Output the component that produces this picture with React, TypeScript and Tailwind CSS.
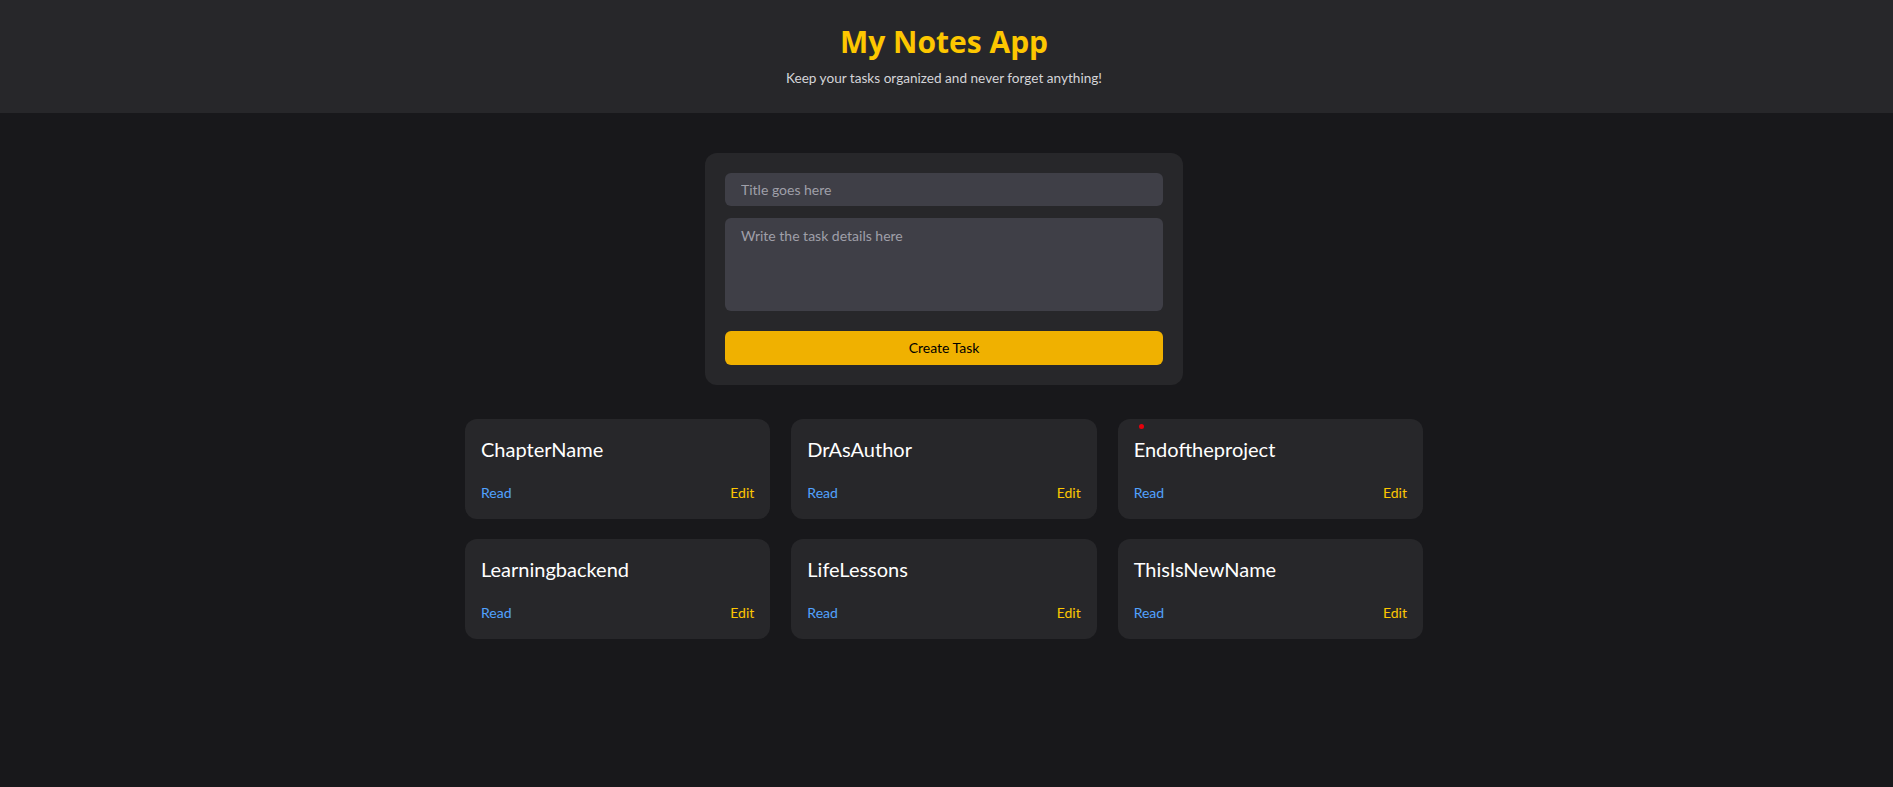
import React, { useState } from "react";

interface Note {
  title: string;
  badge?: boolean;
}

const NOTES: Note[] = [
  { title: "ChapterName" },
  { title: "DrAsAuthor" },
  { title: "Endoftheproject", badge: true },
  { title: "Learningbackend" },
  { title: "LifeLessons" },
  { title: "ThisIsNewName" },
];

const NoteCard = ({ note }: { note: Note }) => (
  <div className="relative rounded-xl bg-zinc-800 p-4">
    {note.badge && (
      <span className="absolute left-[21px] top-[5px] h-[5px] w-[5px] rounded-full bg-red-600" />
    )}
    <h2 className="mb-5 text-xl leading-7 text-white">{note.title}</h2>
    <div className="flex items-center justify-between text-sm leading-5">
      <button className="text-blue-400">Read</button>
      <button className="text-yellow-400">Edit</button>
    </div>
  </div>
);

export default function App() {
  const [title, setTitle] = useState("");
  const [details, setDetails] = useState("");

  return (
    <div className="min-h-screen bg-[#18181b] font-['Lato',sans-serif]">
      <header className="bg-zinc-800 pb-[25px] pr-[5px] pt-6 text-center">
        <h1 className="mb-2 font-['Open_Sans',sans-serif] text-3xl font-bold text-yellow-400">
          My Notes App
        </h1>
        <p className="text-[13.6px] leading-5 text-zinc-300">
          Keep your tasks organized and never forget anything!
        </p>
      </header>

      <main className="flex flex-col items-center pr-[5px] pt-10">
        <form
          className="flex w-[478px] flex-col rounded-xl bg-zinc-800 p-5"
          onSubmit={e => e.preventDefault()}
        >
          <input
            value={title}
            onChange={e => setTitle(e.target.value)}
            placeholder="Title goes here"
            className="h-[33px] rounded-md bg-zinc-700 px-4 text-sm text-zinc-100 outline-none placeholder:text-zinc-400"
          />
          <textarea
            value={details}
            onChange={e => setDetails(e.target.value)}
            placeholder="Write the task details here"
            className="mt-3 h-[93px] resize-none rounded-md bg-zinc-700 px-4 py-2 text-sm text-zinc-100 outline-none placeholder:text-zinc-400"
          />
          <button
            type="submit"
            className="mt-5 h-[34px] rounded-md bg-yellow-500 text-sm text-black"
          >
            Create Task
          </button>
        </form>

        <div className="mt-[34px] grid w-[958px] grid-cols-3 gap-x-[21px] gap-y-5">
          {NOTES.map(note => (
            <NoteCard key={note.title} note={note} />
          ))}
        </div>
      </main>
    </div>
  );
}
